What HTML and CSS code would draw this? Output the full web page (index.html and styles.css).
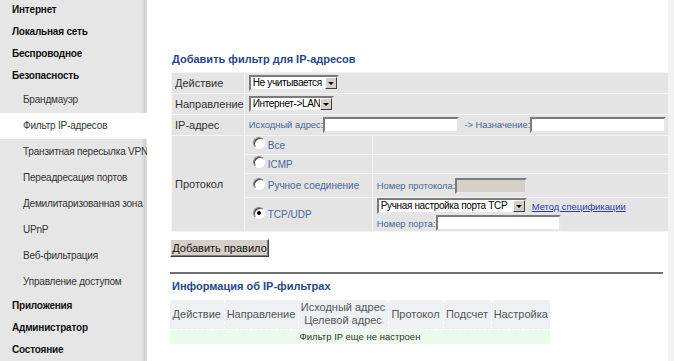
FILE: index.html
```html
<!DOCTYPE html>
<html lang="ru">
<head>
    <meta charset="UTF-8">
    <title>Фильтр IP-адресов</title>
    <link rel="stylesheet" href="styles.css">
</head>
<body>
    <nav class="sidebar">
        <ul class="menu">
            <li class="menu-top">Интернет</li>
            <li class="menu-top">Локальная сеть</li>
            <li class="menu-top">Беспроводное</li>
            <li class="menu-top">Безопасность</li>
            <li class="menu-sub">Брандмауэр</li>
            <li class="menu-sub active">Фильтр IP-адресов</li>
            <li class="menu-sub">Транзитная пересылка VPN</li>
            <li class="menu-sub">Переадресация портов</li>
            <li class="menu-sub">Демилитаризованная зона</li>
            <li class="menu-sub">UPnP</li>
            <li class="menu-sub">Веб-фильтрация</li>
            <li class="menu-sub">Управление доступом</li>
            <li class="menu-top">Приложения</li>
            <li class="menu-top">Администратор</li>
            <li class="menu-top">Состояние</li>
        </ul>
    </nav>

    <main class="content">
        <h2 class="section-title">Добавить фильтр для IP-адресов</h2>

        <table class="form-table">
            <tr class="row-std">
                <td class="lbl">Действие</td>
                <td colspan="2">
                    <span class="combo combo-action">
                        <select><option>Не учитывается</option></select>
                        <span class="combo-btn"></span>
                    </span>
                </td>
            </tr>
            <tr class="row-std">
                <td class="lbl">Направление</td>
                <td colspan="2">
                    <span class="combo combo-dir">
                        <select><option>Интернет-&gt;LAN</option></select>
                        <span class="combo-btn"></span>
                    </span>
                </td>
            </tr>
            <tr class="row-std">
                <td class="lbl">IP-адрес</td>
                <td colspan="2" class="ip-cell">
                    <span class="hint">Исходный адрес:</span><input type="text" class="field field-ip"><span class="hint hint-gap">-&gt; Назначение:</span><input type="text" class="field field-ip">
                </td>
            </tr>
            <tr class="row-all">
                <td class="lbl" rowspan="4">Протокол</td>
                <td class="opt"><label><input type="radio" name="proto"><span>Все</span></label></td>
                <td class="extra"></td>
            </tr>
            <tr class="row-icmp">
                <td class="opt"><label><input type="radio" name="proto"><span>ICMP</span></label></td>
                <td class="extra"></td>
            </tr>
            <tr class="row-manual">
                <td class="opt"><label><input type="radio" name="proto"><span>Ручное соединение</span></label></td>
                <td class="extra">
                    <span class="hint">Номер протокола:</span><input type="text" class="field field-proto" disabled>
                </td>
            </tr>
            <tr class="row-tcp">
                <td class="opt"><label><input type="radio" name="proto" checked><span>TCP/UDP</span></label></td>
                <td class="extra">
                    <div class="line">
                        <span class="combo combo-port">
                            <select><option>Ручная настройка порта TCP</option></select>
                            <span class="combo-btn"></span>
                        </span>
                        <a href="#" class="spec-link">Метод спецификации</a>
                    </div>
                    <div class="line">
                        <span class="hint">Номер порта:</span><input type="text" class="field field-port">
                    </div>
                </td>
            </tr>
        </table>

        <button class="btn-add">Добавить правило</button>

        <hr class="divider">

        <h2 class="section-title">Информация об IP-фильтрах</h2>

        <table class="info-table">
            <tr class="info-head">
                <th class="c-act">Действие</th>
                <th class="c-dir">Направление</th>
                <th class="c-addr">Исходный адрес<br>Целевой адрес</th>
                <th class="c-proto">Протокол</th>
                <th class="c-count">Подсчет</th>
                <th class="c-set">Настройка</th>
            </tr>
            <tr class="info-empty">
                <td colspan="6">Фильтр IP еще не настроен</td>
            </tr>
        </table>
    </main>

    <div class="edge"></div>
</body>
</html>
```

FILE: styles.css
```css
* {
    box-sizing: border-box;
    margin: 0;
    padding: 0;
}

html, body {
    height: 100%;
}

body {
    display: flex;
    font-family: "Liberation Sans", Arial, sans-serif;
    background: #fff;
    color: #333;
    overflow: hidden;
}

/* left menu */
.sidebar {
    width: 147px;
    flex-shrink: 0;
    background: linear-gradient(to right, #e6e6e6 0, #e6e6e6 141px, #dcdcdc 143px, #cfcfcf 145px, #e4e4e4 147px);
    overflow: hidden;
}

.menu {
    list-style: none;
    margin-top: -1px;
}

.menu li {
    white-space: nowrap;
    overflow: hidden;
    font-size: 10px;
    letter-spacing: -0.2px;
}

.menu-top {
    height: 22px;
    line-height: 22px;
    padding-left: 12px;
    font-weight: bold;
    color: #111;
}

.menu-sub {
    height: 26px;
    line-height: 26px;
    padding-left: 23px;
    color: #333;
}

.menu-sub.active {
    background: #fff;
}

/* main area */
.content {
    width: 521px;
    padding: 52px 2px 0 23px;
}

.section-title {
    font-size: 11px;
    line-height: 14px;
    font-weight: bold;
    color: #26468c;
    padding-left: 2px;
}

.form-table {
    margin: 6px 0 0 1px;
    width: 495px;
    border-collapse: collapse;
    background: #e4e4e4;
    font-size: 11px;
}

.form-table td {
    border: 1px solid #f4f4f4;
    vertical-align: middle;
    padding: 0 4px;
}

.form-table td.lbl {
    width: 73px;
    padding: 0 0 0 3px;
    color: #333;
    white-space: nowrap;
}

.row-std td { height: 21px; }
.row-all td { height: 19px; }
.row-icmp td { height: 19px; }
.row-manual td { height: 24px; }
.row-tcp td { height: 33px; }

.form-table td.opt {
    width: 128px;
    padding-left: 8px;
}

.form-table td.extra {
    padding-left: 4px;
}

.opt label {
    display: flex;
    align-items: center;
    color: #4a6797;
    font-size: 10px;
}

.opt input[type="radio"] {
    appearance: none;
    width: 12px;
    height: 12px;
    margin: -4px 3px 0 0;
    border-radius: 50%;
    border: 1px solid;
    border-color: #808080 #fff #fff #808080;
    background: #fff;
    box-shadow: inset 1px 1px 0 #404040;
}

.opt input[type="radio"]:checked {
    background: radial-gradient(circle, #000 0, #000 1.8px, #fff 2.2px);
}

.hint {
    font-size: 9.4px;
    color: #4a6797;
}

.hint-gap {
    margin-left: 5px;
}

.field {
    height: 16px;
    border: 2px solid;
    border-color: #7b7b7b #e6e6e6 #e6e6e6 #7b7b7b;
    background: #fff;
    vertical-align: middle;
    font-size: 10px;
    outline: none;
}

.ip-cell {
    white-space: nowrap;
}

.field-ip { width: 136px; }

.field-proto {
    width: 72px;
    background: #d4d0c8;
}

.field-port {
    width: 125px;
}

.line {
    display: flex;
    align-items: center;
    gap: 5px;
}

.line + .line {
    margin-top: 1px;
    gap: 0;
}

/* classic combo box */
.combo {
    display: inline-flex;
    align-items: center;
    height: 16px;
    border: 2px solid;
    border-color: #7b7b7b #e6e6e6 #e6e6e6 #7b7b7b;
    background: #fff;
    vertical-align: middle;
}

.combo select {
    appearance: none;
    flex: 1;
    width: 0;
    min-width: 0;
    border: none;
    background: transparent;
    font-family: "Liberation Sans", Arial, sans-serif;
    font-size: 10px;
    letter-spacing: -0.35px;
    color: #000;
    padding-left: 2px;
    height: 12px;
    line-height: 12px;
    outline: none;
}

.combo-btn {
    position: relative;
    flex-shrink: 0;
    width: 12px;
    height: 12px;
    background: #d4d0c8;
    border: 1px solid;
    border-color: #fff #404040 #404040 #fff;
}

.combo-btn::after {
    content: "";
    position: absolute;
    left: 2px;
    top: 4px;
    border-left: 3px solid transparent;
    border-right: 3px solid transparent;
    border-top: 3px solid #000;
}

.combo-action { width: 90px; }
.combo-dir { width: 85px; }
.combo-port { width: 150px; }

.spec-link {
    font-size: 9.4px;
    color: #2f3a99;
}

.btn-add {
    display: block;
    margin-top: 7px;
    width: 99px;
    height: 18px;
    background: #d4d0c8;
    border: 1px solid;
    border-color: #fff #404040 #404040 #fff;
    box-shadow: inset -1px -1px 0 #808080;
    font-family: "Liberation Sans", Arial, sans-serif;
    font-size: 11px;
    color: #111;
}

.divider {
    margin: 15px 0 5px;
    width: 493px;
    border: none;
    border-top: 2px solid #707070;
}

.info-table {
    margin-top: 7px;
    border-collapse: collapse;
    table-layout: fixed;
    width: 380px;
    font-size: 11px;
}

.info-head th {
    height: 29px;
    background: #eef0f4;
    font-weight: normal;
    color: #555;
    line-height: 13px;
    border-left: 1px dashed #fff;
    padding: 0;
    white-space: nowrap;
}

.info-head th:first-child {
    border-left: none;
}

.c-act { width: 54px; }
.c-dir { width: 74px; }
.c-addr { width: 90px; }
.c-proto { width: 55px; }
.c-count { width: 48px; }
.c-set { width: 59px; }

.info-empty td {
    height: 15px;
    background: #eafbea;
    border-top: 1px dashed #fff;
    text-align: center;
    font-size: 9.5px;
    color: #333;
}

.edge {
    position: fixed;
    top: 0;
    right: 0;
    width: 6px;
    height: 100%;
    background: #f2f2f2;
}
```
